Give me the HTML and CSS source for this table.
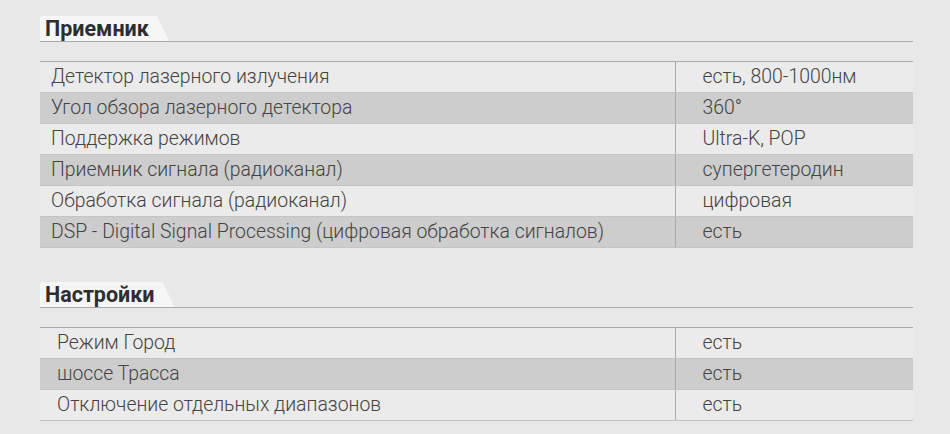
FILE: index.html
```html
<!DOCTYPE html>
<html lang="ru">
<head>
<meta charset="utf-8">
<link rel="stylesheet" href="styles.css">
</head>
<body>
<section class="section">
  <div class="head"><h2 class="tab">Приемник</h2></div>
  <table class="specs">
    <colgroup><col class="ck"><col></colgroup>
    <tr><td class="k">Детектор лазерного излучения</td><td class="v">есть, 800-1000нм</td></tr>
    <tr class="alt"><td class="k">Угол обзора лазерного детектора</td><td class="v">360°</td></tr>
    <tr><td class="k">Поддержка режимов</td><td class="v">Ultra-K, POP</td></tr>
    <tr class="alt"><td class="k">Приемник сигнала (радиоканал)</td><td class="v">супергетеродин</td></tr>
    <tr><td class="k">Обработка сигнала (радиоканал)</td><td class="v">цифровая</td></tr>
    <tr class="alt"><td class="k">DSP - Digital Signal Processing (цифровая обработка сигналов)</td><td class="v">есть</td></tr>
  </table>
</section>
<section class="section second">
  <div class="head"><h2 class="tab">Настройки</h2></div>
  <table class="specs">
    <colgroup><col class="ck"><col></colgroup>
    <tr><td class="k ind">Режим Город</td><td class="v">есть</td></tr>
    <tr class="alt"><td class="k ind">шоссе Трасса</td><td class="v">есть</td></tr>
    <tr><td class="k ind">Отключение отдельных диапазонов</td><td class="v">есть</td></tr>
  </table>
</section>
</body>
</html>
```
FILE: styles.css
```css
html, body {
  margin: 0;
  padding: 0;
  background: #e8e8e8;
}
body {
  font-family: Roboto, "Noto Sans", sans-serif;
  color: #3a3a3a;
  padding: 16px 37px 0 40px;
}
.section.second {
  margin-top: 34px;
}
.head {
  border-bottom: 1px solid #a9a9a9;
  height: 25px;
}
.tab {
  display: inline-block;
  margin: 0;
  height: 25px;
  line-height: 26px;
  padding: 0 20px 0 5px;
  font-size: 21.5px;
  font-weight: 700;
  color: #2e2e2e;
  background: #f6f6f6;
  clip-path: polygon(0 0, calc(100% - 12px) 0, 100% 100%, 0 100%);
  border-radius: 3px 0 0 0;
}
.specs {
  width: 100%;
  table-layout: fixed;
  margin-top: 19px;
  border-collapse: collapse;
  border-top: 1px solid #a9a9a9;
  font-family: "Roboto Light", Roboto, "Noto Sans", sans-serif;
  font-size: 19.4px;
  font-weight: 300;
  color: #444;
}
.ck {
  width: 635px;
}
.specs td {
  height: 30px;
  padding: 0;
  border-bottom: 1px solid #c4c4c4;
  line-height: 30px;
  white-space: nowrap;
  background: #ebebeb;
}
.specs tr.alt td {
  background: #cdcdcd;
}
.k {
  padding-left: 11px !important;
}
.k.ind {
  padding-left: 17px !important;
}
.v {
  border-left: 1px solid #a9a9a9;
  padding-left: 27px !important;
}
```
